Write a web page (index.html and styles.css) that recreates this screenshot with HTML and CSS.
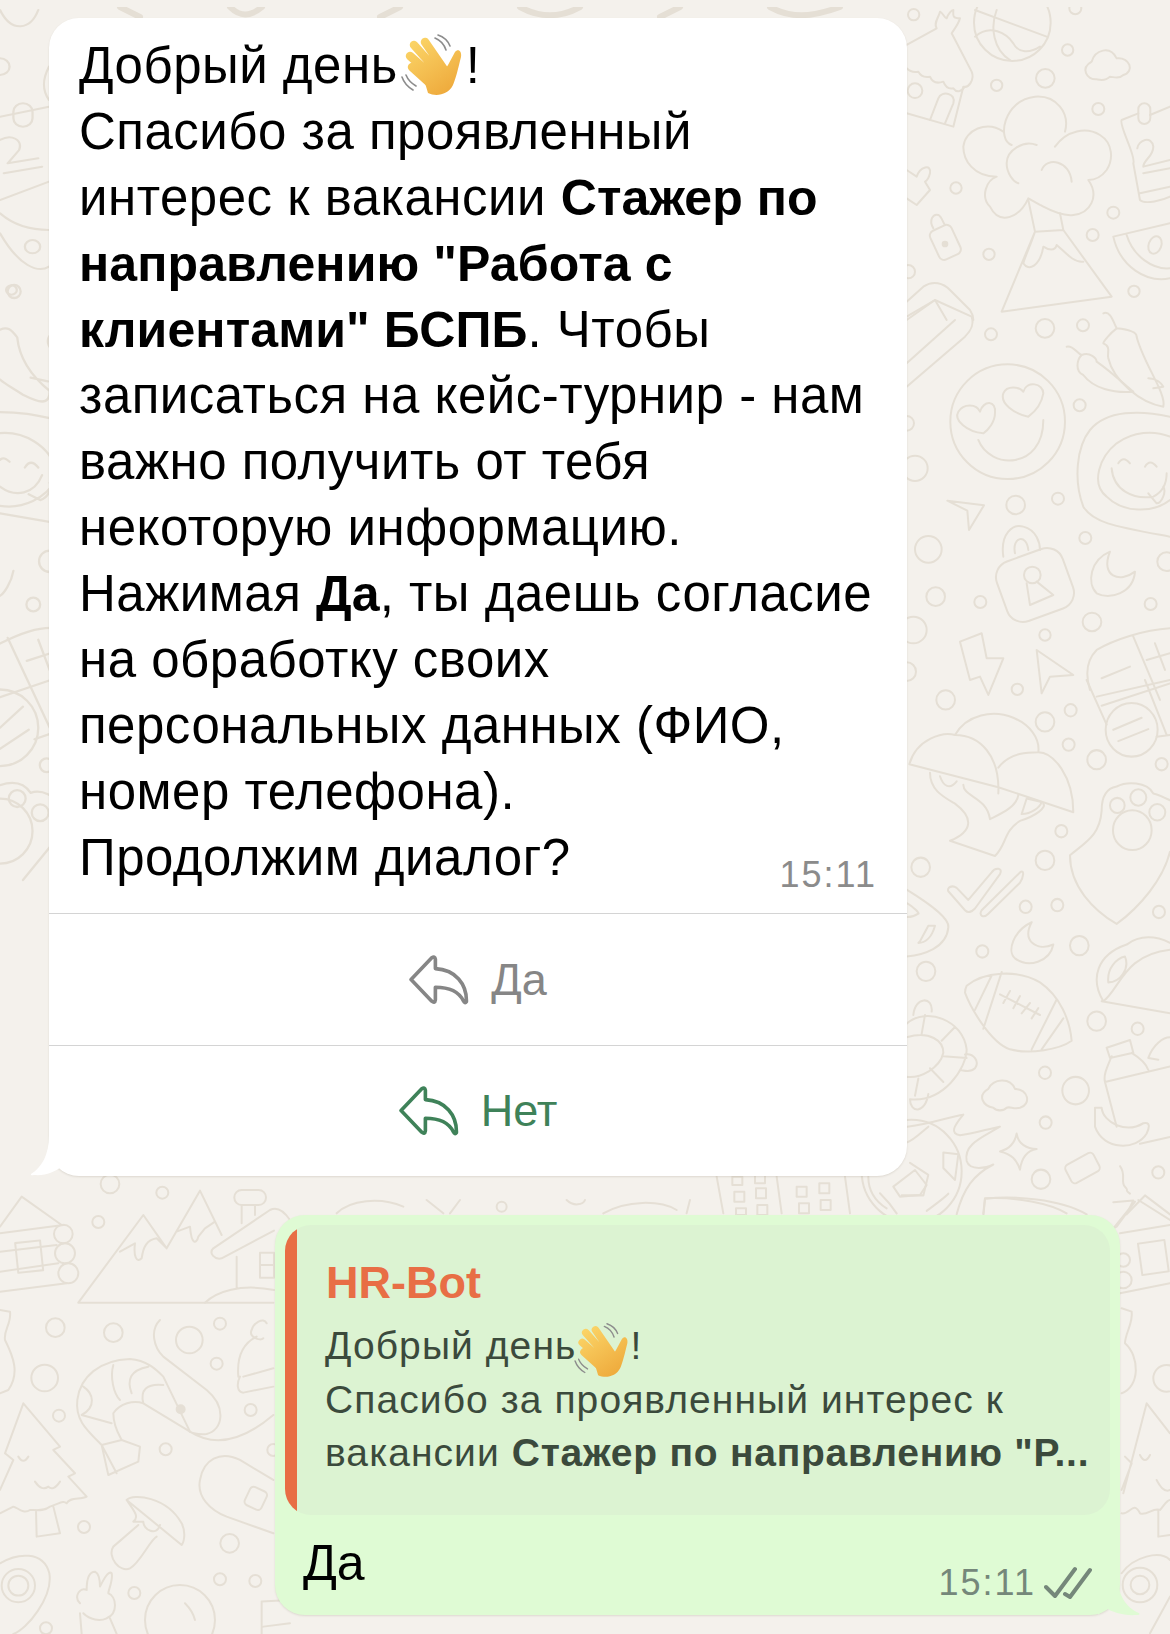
FILE: index.html
```html
<!DOCTYPE html>
<html lang="en">
<head>
    <meta charset="UTF-8">
    <meta name="viewport" content="width=device-width, initial-scale=1.0">
    <title>HR-Bot</title>
    <link rel="stylesheet" href="styles.css">
</head>
<body>
    <!-- wallpaper doodles, coordinates are in the units of each group's own scale -->
    <svg class="wallpaper" width="1170" height="1634" viewBox="0 0 1170 1634" aria-hidden="true">
        <defs>
            <clipPath id="wallClip"><rect x="0" y="7" width="1170" height="1627"/></clipPath>
            <linearGradient id="handFill" gradientUnits="userSpaceOnUse" x1="12" y1="8" x2="50" y2="62">
                <stop offset="0" stop-color="#fbd568"/>
                <stop offset="1" stop-color="#eea93b"/>
            </linearGradient>
            <symbol id="wave" viewBox="3 0 65 70">
                <g fill="none" stroke="#8d8d8d" stroke-width="1.6" stroke-linecap="round">
                    <path d="M37 5C42 7 46 11 48 17M40 2C46 4 50 8 52 13M4 44C6 50 10 54 15 57M8 42C10 47 13 50 18 53"/>
                </g>
                <path d="M30 60C38 64 50 62 55 52C58 45 60 36 63 24C64 18 60 15 57 19L50 32L42 44L24 40Z" fill="url(#handFill)"/>
                <g fill="none" stroke="url(#handFill)" stroke-width="8.5" stroke-linecap="round">
                    <path d="M27 9L47 38M16 12L41 40M12 23L37 45M14 34L35 53"/>
                </g>
            </symbol>
        </defs>
        <g clip-path="url(#wallClip)" class="doodles">
            <g transform="translate(900 0) scale(.3333)">
                <circle cx="41" cy="44" r="17"/><circle cx="503" cy="150" r="17"/><circle cx="436" cy="235" r="28"/><circle cx="290" cy="256" r="17"/><circle cx="595" cy="327" r="18"/><circle cx="168" cy="564" r="17"/><circle cx="267" cy="763" r="17"/><circle cx="578" cy="705" r="18"/><circle cx="640" cy="638" r="18"/><circle cx="702" cy="874" r="17"/><circle cx="526" cy="25" r="18"/><circle cx="25" cy="815" r="20"/>
                <circle cx="337" cy="68" r="115"/>
                <path d="M225 30L440 110M290 30C270 80 280 150 330 180M225 110C270 70 320 100 340 130C355 160 390 160 420 140"/>
                <path d="M20 135L110 85C100 70 115 55 120 35C130 40 130 50 140 55C145 40 155 30 160 30C160 45 155 55 180 55C175 75 160 90 155 100L215 215C225 240 205 265 190 260L160 380L20 340"/>
                <path d="M20 205Q35 220 55 215Q65 235 90 230Q100 255 130 245Q140 270 160 265Q175 285 195 260M90 360L115 295C125 270 170 280 160 310L135 370"/>
                <circle cx="45" cy="272" r="22"/>
                <path d="M590 238C560 240 540 205 575 185C585 150 630 135 650 175C690 170 705 215 670 225C655 240 640 230 630 230C615 245 600 240 590 238Z"/>
                <path d="M335 435C290 420 310 300 405 290C470 285 510 340 495 395M465 440C500 390 560 380 600 405C640 430 640 480 620 510C605 530 590 540 565 540C600 590 570 640 520 645C480 650 440 625 420 615L385 595C360 650 300 680 270 620C240 590 260 540 290 530C220 530 190 480 190 440C195 390 260 360 310 395"/>
                <path d="M410 435C370 420 320 450 320 490C320 520 340 545 355 550M425 510C440 470 510 480 515 545"/>
                <path d="M385 600L405 695L490 690L480 640M405 695L305 935L635 890L490 690M405 695C390 740 375 770 370 790C385 815 420 800 430 740C445 750 465 755 470 735C490 750 520 790 550 785"/>
                <path d="M20 510L50 530C60 500 95 490 90 520C85 540 75 545 75 545L90 570L50 615L20 595"/>
                <rect x="100" y="680" width="70" height="95" rx="16" transform="rotate(-25 135 725)"/>
                <path d="M100 685C85 660 100 640 115 645C125 650 130 670 135 675"/>
                <circle cx="135" cy="732" r="7" class="solid"/>
                <path d="M810 320L750 345M715 340L665 360C655 375 710 470 700 490L720 600C735 615 790 600 810 590M720 580L810 560"/>
                <rect x="715" y="310" width="36" height="62" rx="18"/>
                <path d="M712 445C715 420 755 405 760 440C760 470 730 480 730 500L810 480M730 520L810 505"/>
                <path d="M640 710L810 670M640 710C660 800 740 850 810 835M680 705C700 770 760 810 810 805"/>
                <ellipse cx="765" cy="735" rx="19" ry="27" transform="rotate(20 765 735)"/>
                <path d="M20 905L70 860C100 840 130 850 150 870L210 930C220 945 220 960 220 960M20 960L105 900L140 960"/>
            </g>
            <g transform="translate(900 300) scale(.3333)">
                <circle cx="273" cy="103" r="18"/><circle cx="435" cy="85" r="28"/><circle cx="549" cy="76" r="18"/><circle cx="539" cy="316" r="18"/><circle cx="347" cy="615" r="28"/><circle cx="474" cy="596" r="18"/><circle cx="85" cy="748" r="40"/><circle cx="556" cy="714" r="18"/><circle cx="107" cy="890" r="28"/><circle cx="241" cy="906" r="18"/><circle cx="752" cy="912" r="18"/><circle cx="576" cy="966" r="28"/><circle cx="435" cy="1005" r="17"/><circle cx="352" cy="1168" r="17"/><circle cx="45" cy="505" r="38"/><circle cx="800" cy="785" r="28"/><circle cx="20" cy="370" r="22"/><circle cx="20" cy="1115" r="28"/><circle cx="40" cy="990" r="40"/>
                <path d="M20 50L105 0L215 50C225 80 205 100 195 110L20 260M20 190L165 60"/>
                <circle cx="323" cy="365" r="172"/>
                <path d="M250 400C200 395 160 360 175 335C190 310 230 310 240 335C250 300 290 300 285 340C285 365 265 390 250 400Z"/>
                <path d="M385 350C340 340 300 310 310 280C320 255 360 260 370 275C380 240 430 250 430 280C425 310 405 335 385 350Z"/>
                <path d="M235 420C270 510 430 510 430 360"/>
                <path d="M500 140C520 135 530 160 545 165C530 180 525 215 550 225C580 265 640 280 700 275M545 165C570 155 590 175 590 185C640 220 680 260 700 275"/>
                <path d="M610 40C630 30 640 65 650 85C630 100 610 125 610 130C635 140 620 160 625 175C640 240 720 310 790 320C800 280 730 190 710 110C710 100 700 90 650 85M745 235C770 235 785 250 790 260L760 265"/>
                <path d="M810 350C720 330 620 330 570 390C530 440 520 540 550 620C580 670 650 680 810 710"/>
                <path d="M810 410C760 390 700 395 650 430C600 470 570 550 620 590C670 640 760 640 810 600"/>
                <path d="M655 490Q670 465 690 490M735 500Q750 475 770 500M635 505C640 570 700 600 760 590C790 575 800 550 800 520M745 580L770 610C785 610 800 575 790 560"/>
                <path d="M142 602L252 616L207 690L202 632Z"/>
                <rect x="300" y="760" width="210" height="190" rx="50" transform="rotate(-20 405 855)"/>
                <path d="M310 770C300 700 340 670 370 680C410 690 420 730 420 750M345 760C335 710 380 700 385 750"/>
                <circle cx="397" cy="825" r="25"/>
                <path d="M380 850L390 915L460 885L410 845"/>
                <path d="M630 755C570 780 560 850 590 880C630 900 700 880 705 815C660 850 600 830 630 755Z"/>
                <path d="M180 1025L245 1000L260 1075L310 1075L265 1185L240 1130L210 1140Z"/>
                <path d="M410 1050L520 1125L450 1130L425 1180Z"/>
                <path d="M810 985C730 990 640 1020 590 1050C560 1080 555 1120 570 1170M700 1010L780 1200M605 1135L690 1100M740 1080L810 1060M765 1030L795 1110M590 1190L810 1140"/>
            </g>
            <g transform="translate(900 680) scale(.3333 .3436)">
                <circle cx="137" cy="58" r="28"/><circle cx="435" cy="122" r="28"/><circle cx="512" cy="88" r="18"/><circle cx="506" cy="188" r="18"/><circle cx="590" cy="232" r="28"/><circle cx="785" cy="245" r="18"/><circle cx="484" cy="440" r="18"/><circle cx="435" cy="525" r="28"/><circle cx="62" cy="545" r="28"/><circle cx="377" cy="660" r="18"/><circle cx="472" cy="655" r="18"/><circle cx="777" cy="675" r="18"/><circle cx="538" cy="773" r="28"/><circle cx="247" cy="790" r="18"/><circle cx="78" cy="848" r="28"/><circle cx="590" cy="993" r="28"/><circle cx="713" cy="1015" r="18"/><circle cx="435" cy="1143" r="18"/><circle cx="527" cy="1195" r="40"/><circle cx="437" cy="1288" r="18"/><circle cx="423" cy="1453" r="28"/><circle cx="775" cy="1433" r="18"/>
                <path d="M28 245C50 170 130 150 165 160C200 100 280 85 340 110C390 130 420 170 415 210C460 210 520 280 520 385L295 312L28 245M165 160C240 160 300 220 295 330M295 255C330 210 390 210 415 210"/>
                <path d="M90 270C90 320 130 340 165 360C220 400 220 440 150 468L285 512C320 480 310 440 360 410C410 395 440 370 430 360M120 280C130 310 150 320 170 295M190 305C190 340 260 340 270 405C300 390 350 370 355 335M365 390C395 390 420 370 425 355L380 345Z"/>
                <path d="M560 0L620 130M605 75L810 10M640 145L725 110M655 178L745 143M735 0L800 160M770 165L810 160"/>
                <circle cx="695" cy="145" r="78"/>
                <path d="M510 510C560 470 600 450 605 380C605 340 620 315 650 310C680 295 740 295 760 330C780 335 810 350 810 350M510 510C510 600 580 670 650 710C720 660 790 580 810 500"/>
                <circle cx="652" cy="365" r="22"/><circle cx="715" cy="342" r="24"/><circle cx="772" cy="385" r="24"/><circle cx="697" cy="437" r="58"/>
                <path d="M145 615L195 670C205 680 215 675 225 665L300 565C310 545 285 545 275 560L205 640L170 605C155 595 140 605 145 615ZM245 670L360 560C375 550 370 575 360 590L265 680C250 695 235 685 245 670Z"/>
                <path d="M395 705C340 730 320 790 345 810C385 840 450 820 460 770C410 790 365 760 395 705Z"/>
                <path d="M200 890C250 850 350 840 420 880C480 920 510 990 515 1050C480 1075 390 1090 330 1075C270 1055 210 950 195 910C195 900 200 890 200 890ZM275 860L225 960M305 850L250 1015M470 930L395 1075M490 985L425 1075M300 915L420 975M330 905L310 940M360 920L340 955M390 940L365 970M415 955L395 985"/>
                <path d="M20 1000C80 950 190 990 200 1075C200 1130 130 1230 30 1220M20 1040C90 1020 130 1050 130 1085C120 1130 60 1160 20 1155M65 1030L75 975M125 1050L165 1010M130 1095L200 1100M90 1130L130 1170M55 1160L45 1210M195 1090C220 1085 240 1110 225 1130C210 1145 190 1135 180 1135M40 975C45 920 100 920 95 965M30 1220C30 1260 75 1265 85 1205"/>
                <path d="M20 610C70 640 150 690 145 720C140 780 70 800 20 805M60 760L85 715L105 715C95 750 75 765 55 765ZM22 650C40 660 60 680 55 680C40 690 25 690 22 690"/>
                <path d="M610 935C570 870 590 800 680 770C720 740 770 745 810 765M605 935L810 970M610 935C660 900 670 800 810 785M625 880C620 840 650 810 675 805C690 840 660 880 625 880Z"/>
                <path d="M620 1070L690 1048L700 1085L630 1100ZM635 1095C620 1130 610 1150 615 1170L650 1300M695 1085C720 1100 740 1120 745 1135M615 1170L810 1125M745 1100C760 1060 790 1040 810 1040M745 1100L775 1105"/>
                <path d="M280 1245C250 1240 230 1210 265 1190C280 1160 330 1155 345 1190C385 1190 395 1235 360 1245C340 1250 330 1240 320 1245C310 1255 290 1255 280 1245Z"/>
                <path d="M585 1245L605 1245C610 1290 680 1320 730 1290C750 1285 750 1300 740 1320C710 1370 610 1370 585 1300ZM720 1350L810 1330"/>
                <path d="M350 1320C355 1350 380 1365 410 1365C380 1370 365 1390 360 1425C350 1395 335 1380 300 1372C330 1365 345 1345 350 1320Z"/>
                <rect x="500" y="1390" width="95" height="60" rx="12" transform="rotate(-28 548 1420)"/>
                <path d="M660 1415C680 1440 660 1460 675 1475C690 1490 670 1480 690 1495"/>
                <circle cx="35" cy="1430" r="150"/>
                <path d="M30 1405L85 1440L70 1500L5 1500M130 1375L175 1380L165 1455L130 1420ZM22 1345C40 1340 60 1320 85 1300M80 1545C100 1530 130 1510 145 1495"/>
                <path d="M22 1300C100 1290 150 1270 190 1265C160 1300 150 1320 180 1325C220 1320 270 1305 300 1300C250 1330 190 1350 200 1400C210 1430 260 1420 280 1410C220 1440 190 1480 170 1555"/>
                <path d="M255 1510C340 1500 480 1510 560 1555M255 1510L250 1560M640 1520L700 1515L680 1555M680 1555L735 1500L810 1555"/>
            </g>
            <g transform="translate(0 1160) scale(.3333)">
                <circle cx="487" cy="98" r="18"/><circle cx="295" cy="186" r="18"/><circle cx="166" cy="503" r="28"/><circle cx="340" cy="518" r="28"/><circle cx="568" cy="540" r="40"/><circle cx="660" cy="491" r="18"/><circle cx="650" cy="611" r="18"/><circle cx="134" cy="654" r="40"/><circle cx="177" cy="767" r="18"/><circle cx="752" cy="750" r="18"/><circle cx="497" cy="868" r="18"/><circle cx="252" cy="1101" r="18"/><circle cx="689" cy="1150" r="28"/><circle cx="660" cy="1258" r="18"/><circle cx="766" cy="1263" r="18"/><circle cx="403" cy="1299" r="18"/><circle cx="330" cy="72" r="28"/><circle cx="138" cy="1405" r="18"/><circle cx="820" cy="870" r="18"/>
                <path d="M0 200L65 110L185 195M0 220L190 195M0 335L175 310M0 275L170 255M0 395L200 370"/>
                <circle cx="190" cy="222" r="28"/><circle cx="195" cy="280" r="30"/><circle cx="205" cy="340" r="30"/>
                <rect x="50" y="245" width="75" height="90" transform="rotate(-6 87 290)"/>
                <path d="M235 428L430 165L500 265L600 92L665 225M235 428L820 428M360 275L405 250C400 290 410 310 425 295C430 260 440 240 470 235L500 265M530 215L570 200C575 260 590 250 595 230L615 205L645 185"/>
                <path d="M640 265C625 280 645 300 665 295L822 212M640 265L810 150C830 140 850 150 870 180M725 135L725 190M765 135L765 165M710 290L710 385M615 428C650 395 720 370 822 390"/>
                <rect x="703" y="90" width="95" height="45" rx="22"/>
                <rect x="780" y="278" width="42" height="75"/>
                <path d="M780 315L822 315"/>
                <path d="M232 720C240 650 300 600 390 597C440 600 470 630 490 650L570 815L430 730C400 720 360 730 340 760C340 800 360 830 365 840L305 855C260 810 225 780 232 720ZM250 680C280 700 290 740 245 765M340 615C330 650 340 700 360 720M395 700C380 660 390 630 445 620M430 730C420 690 440 670 490 675M245 765L335 790M305 855L325 945L415 905L420 860L365 840M305 855L350 940"/>
                <circle cx="542" cy="748" r="12" class="solid"/>
                <path d="M480 480C450 510 460 560 490 590L620 690C680 740 670 810 620 822C590 825 565 815 570 815M570 815C640 860 720 850 820 765"/>
                <path d="M800 490C790 470 760 490 755 510C745 530 780 545 790 535M770 530C730 550 710 590 715 650M720 650C710 670 710 695 730 698L820 680M730 650L820 625"/>
                <path d="M15 880L70 730L180 860L160 870L225 940L205 950L260 1010C240 1020 210 1010 200 1030C190 1020 180 1030 150 1040C130 1055 110 1050 90 1050C70 1065 50 1040 40 1040L0 1060M15 880L40 900L0 990M55 890Q70 915 85 890M105 965Q125 995 145 980Q160 995 180 965M108 1050L110 1130L180 1120L160 1040"/>
                <path d="M0 450L30 455C35 490 10 510 15 540C40 590 60 640 25 690L0 700"/>
                <path d="M380 1020C400 1000 500 1010 545 1090C560 1120 550 1150 545 1155ZM380 1020C400 1050 420 1070 400 1085L430 1085C430 1110 470 1130 480 1095M415 1095L340 1160C320 1190 360 1240 390 1225C420 1210 450 1140 470 1130"/>
                <path d="M820 960L720 900C660 870 610 900 600 960C590 1010 630 1050 680 1070L820 1120"/>
                <rect x="740" y="985" width="55" height="60" rx="12" transform="rotate(25 767 1015)"/>
                <path d="M0 1210C50 1180 130 1170 148 1240C160 1310 80 1410 40 1422"/>
                <circle cx="55" cy="1277" r="50"/><circle cx="55" cy="1277" r="30"/>
                <path d="M240 1330C220 1310 240 1280 260 1290C260 1260 265 1235 285 1235C295 1240 300 1260 300 1280C310 1260 325 1230 335 1240C340 1260 325 1290 325 1300C350 1310 355 1360 320 1375C300 1385 270 1380 250 1360M240 1360L245 1422M330 1375L350 1422"/>
                <circle cx="540" cy="1380" r="105"/>
                <path d="M555 1330C570 1345 580 1360 585 1380M785 1325L785 1422M785 1325L870 1320M790 1400L870 1390"/>
            </g>
            <g transform="translate(1060 1200) scale(.3333)">
                <path d="M160 85L225 5L170 80ZM235 0L330 60M180 100L330 75M180 280L330 250"/>
                <rect x="240" y="125" width="80" height="95" transform="rotate(-8 280 172)"/>
                <circle cx="190" cy="180" r="20"/><circle cx="190" cy="240" r="25"/>
                <path d="M185 325L215 335C220 370 195 400 195 430C240 470 240 560 185 580"/>
                <circle cx="320" cy="535" r="40"/>
                <path d="M190 880L260 610L330 700M195 770L215 790L185 870M185 940C210 945 220 900 240 940C260 950 280 920 300 930C310 920 320 900 330 900M240 765Q255 795 270 765M290 840Q310 880 330 870M295 930L295 1010L330 1005"/>
                <path d="M185 1120C220 1070 300 1050 330 1080M270 1300L330 1190"/>
                <circle cx="240" cy="1155" r="52"/><circle cx="240" cy="1155" r="28"/>
            </g>
            <g transform="translate(700 1170) scale(.3333)">
                <path d="M50 20L70 130M230 20L245 130M435 20L450 130M505 20C505 60 520 90 560 115M540 70C570 100 590 130 590 130M580 50L645 0L680 45L660 75L600 80ZM855 85C950 80 1050 100 1100 130M855 85L850 130"/>
                <rect x="97" y="20" width="30" height="25"/><rect x="165" y="15" width="30" height="25"/><rect x="103" y="65" width="30" height="30"/><rect x="168" y="55" width="30" height="30"/><rect x="108" y="115" width="30" height="20"/><rect x="172" y="105" width="30" height="30"/><rect x="290" y="50" width="30" height="30"/><rect x="358" y="40" width="30" height="30"/><rect x="297" y="100" width="30" height="30"/><rect x="362" y="90" width="30" height="30"/>
            </g>
            <g transform="translate(0 280) scale(.3827)">
                <circle cx="37" cy="30" r="17"/><circle cx="150" cy="160" r="25"/><circle cx="130" cy="735" r="28"/><circle cx="87" cy="848" r="18"/><circle cx="122" cy="1268" r="18"/><circle cx="45" cy="1355" r="22"/><circle cx="105" cy="1392" r="22"/><circle cx="0" cy="1440" r="85"/><circle cx="0" cy="1170" r="100"/>
                <path d="M0 130C20 120 30 130 45 150C50 200 80 250 130 290C130 330 100 320 60 300C30 280 10 270 0 260M80 255L125 265"/>
                <path d="M0 345C60 345 100 355 148 365M0 400C60 395 130 430 148 500M0 590C60 600 120 570 148 520M0 470Q10 460 25 475M65 490Q80 465 100 490M0 540C40 570 90 560 110 510M75 560L105 575C125 570 140 540 130 530"/>
                <path d="M0 610L148 635M35 760C30 790 10 820 0 825"/>
                <path d="M0 950C50 925 100 905 148 910M20 935L130 1170M0 1090L148 1040M70 995L148 970M100 940L130 1020M0 1170L60 1115M0 1225L75 1175M90 1200L148 1180M0 1320C30 1310 60 1310 80 1340C110 1330 148 1350 148 1370M60 1568L148 1460"/>
            </g>
            <g transform="translate(0 0) scale(.3827 .3333)">
                <path d="M0 30C30 100 80 90 100 30M128 200C110 240 110 270 128 300M0 350L128 320M0 600L128 545M0 700C50 800 100 820 128 800M128 690C60 690 20 660 0 640"/>
                <circle cx="0" cy="200" r="25"/><circle cx="85" cy="740" r="20"/><circle cx="30" cy="870" r="14"/>
                <rect x="35" y="310" width="50" height="70" rx="25"/>
                <path d="M0 420C30 400 60 420 50 450L20 490L100 475M10 520L110 500"/>
            </g>
            <g transform="translate(260 1170) scale(.3333)">
                <path d="M230 130C270 90 360 80 430 110M500 90L550 130M600 90L570 130M920 90C940 110 970 105 975 90M1030 130C1100 90 1200 90 1250 120M1290 90L1280 130"/>
                <circle cx="725" cy="110" r="15"/>
            </g>
            <path d="M120 7L140 17M230 7C240 17 250 17 262 7M380 17L400 7M520 7C540 18 560 18 580 7M660 17L680 7M770 7C790 18 810 18 840 7"/>
        </g>
    </svg>

    <main class="chat">
        <section class="bubble bubble-in">
            <div class="msg-text">
                Добрый день<svg class="wave-big"><use href="#wave"/></svg>!<br>
                Спасибо за проявленный<br>
                интерес к вакансии <b>Стажер по</b><br>
                <b>направлению "Работа с</b><br>
                <b>клиентами" БСПБ</b>. Чтобы<br>
                записаться на кейс-турнир - нам<br>
                важно получить от тебя<br>
                некоторую информацию.<br>
                Нажимая <b>Да</b>, ты даешь согласие<br>
                на обработку своих<br>
                персональных данных (ФИО,<br>
                номер телефона).
                <div class="last-line">
                    <span>Продолжим диалог?</span>
                    <span class="time">15:11</span>
                </div>
            </div>
            <div class="reply-btn muted">
                <svg class="reply-icon" viewBox="0 0 58 48"><path d="M2 23.5L22 2.5Q25 .5 25.5 4V13C45 14 56 28 55.5 45Q54 47 52.5 44C48 35 38 31 25.5 31V43Q25 47 22 44.5Z"/></svg>
                <span>Да</span>
            </div>
            <div class="reply-btn accent last-btn">
                <svg class="reply-icon" viewBox="0 0 58 48"><path d="M2 23.5L22 2.5Q25 .5 25.5 4V13C45 14 56 28 55.5 45Q54 47 52.5 44C48 35 38 31 25.5 31V43Q25 47 22 44.5Z"/></svg>
                <span>Нет</span>
            </div>
            <svg class="tail tail-in" width="62" height="42" viewBox="0 0 62 42"><path d="M21 0C21 20 14 32 3 39Q2 41 6 40C18 41 26 37 33 32C40 37 48 40 62 40V0Z"/></svg>
        </section>

        <section class="bubble bubble-out">
            <div class="quote">
                <div class="quote-bar"></div>
                <div class="quote-body">
                    <div class="quote-name">HR-Bot</div>
                    <div class="quote-text">
                        Добрый день<svg class="wave-small"><use href="#wave"/></svg>!<br>
                        Спасибо за проявленный интерес к<br>
                        вакансии <b>Стажер по направлению "Р...</b>
                    </div>
                </div>
            </div>
            <div class="out-row">
                <span class="out-text">Да</span>
                <span class="out-meta">
                    <span class="time">15:11</span>
                    <svg class="checks" width="48" height="34" viewBox="0 0 48 34"><path d="M2 21L11 30L31 3M21 28L26 31L46 4"/></svg>
                </span>
            </div>
            <svg class="tail tail-out" width="44" height="36" viewBox="0 0 44 36"><path d="M20 0C20 14 28 28 41 33Q43 35 38 35C26 36 14 32 8 28C4 31 2 33 0 35V0Z"/></svg>
        </section>
    </main>
</body>
</html>
```

FILE: styles.css
```css
body {
    margin: 0;
    width: 1170px;
    height: 1634px;
    overflow: hidden;
    position: relative;
    background-color: #f4f1ec;
    font-family: "Liberation Sans", Arial, sans-serif;
    color: #000;
}

.wallpaper {
    position: absolute;
    left: 0;
    top: 0;
}

.doodles * {
    fill: none;
    stroke: #e5dfd5;
    stroke-width: 6;
    stroke-linejoin: round;
    stroke-linecap: round;
}

.doodles .solid {
    fill: #e5dfd5;
}

.chat {
    position: relative;
    padding-top: 18px;
}

.bubble {
    position: relative;
    border-radius: 30px;
    box-shadow: 0 1px 2px rgba(120, 110, 90, 0.18);
}

.bubble-in {
    width: 858px;
    margin-left: 49px;
    background-color: #fff;
}

.bubble-out {
    width: 845px;
    height: 400px;
    margin-left: 275px;
    margin-top: 39px;
    padding: 10px 10px 0;
    box-sizing: border-box;
    background-color: #dffbd4;
}

.msg-text {
    padding: 15px 30px 0 30px;
    height: 880px;
    font-size: 51px;
    line-height: 66px;
    letter-spacing: 0.5px;
    white-space: nowrap;
}

.msg-text b {
    font-size: 50px;
    letter-spacing: 0.1px;
}

.last-line {
    display: flex;
    justify-content: space-between;
}

.time {
    font-size: 36px;
    letter-spacing: 2px;
    color: #8b8b8b;
}

.last-line .time {
    padding-top: 17px;
}

.wave-big {
    width: 65px;
    height: 70px;
    margin: -30px 0 -30px 3px;
    vertical-align: 10px;
}

.wave-small {
    width: 58px;
    height: 62px;
    margin: -30px -2px;
    vertical-align: 5px;
}

.reply-btn {
    display: flex;
    justify-content: center;
    align-items: center;
    gap: 22px;
    height: 131px;
    border-top: 1px solid #d4d4d4;
    font-size: 45px;
}

.last-btn {
    height: 130px;
}

.reply-icon {
    width: 60px;
    height: 50px;
    fill: none;
    stroke: currentColor;
    stroke-width: 3.5;
    stroke-linejoin: round;
}

.muted {
    color: #868686;
}

.accent {
    color: #3f8259;
}

.tail {
    position: absolute;
}

.tail-in {
    left: -21px;
    bottom: -1px;
    fill: #fff;
}

.tail-out {
    right: -22px;
    bottom: -1px;
    fill: #dffbd4;
}

.quote {
    display: flex;
    height: 290px;
    overflow: hidden;
    border-radius: 26px;
    background-color: #dcf3d2;
    color: #3b4a3c;
    white-space: nowrap;
}

.quote-bar {
    flex: none;
    width: 12px;
    background-color: #e86e45;
}

.quote-body {
    padding: 32px 0 0 29px;
}

.quote-name {
    font-size: 45px;
    line-height: 52px;
    font-weight: bold;
    color: #e86e45;
}

.quote-text {
    margin-top: 10px;
    margin-left: -1px;
    font-size: 39px;
    line-height: 53.7px;
    letter-spacing: 1.08px;
}

.quote-text b {
    letter-spacing: 0.75px;
}

.out-row {
    display: flex;
    justify-content: space-between;
    padding: 15px 18px 0 18px;
}

.out-text {
    font-size: 50px;
    line-height: 66px;
}

.out-meta {
    display: flex;
    align-items: center;
    gap: 8px;
    padding-top: 32px;
}

.out-meta .time {
    color: #75877a;
}

.checks {
    fill: none;
    stroke: #75877a;
    stroke-width: 4;
    stroke-linecap: round;
    stroke-linejoin: round;
}
```
